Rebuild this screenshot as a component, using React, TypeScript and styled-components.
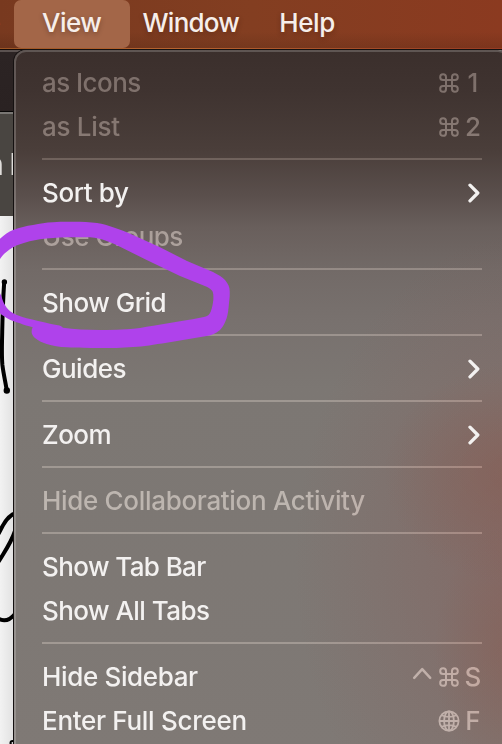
import React from 'react';
import styled, { createGlobalStyle } from 'styled-components';

type IconName = 'command' | 'control' | 'globe';

type MenuEntry = {
  label: string;
  tracking?: number;
  disabled?: boolean;
  submenu?: boolean;
  modifiers?: IconName[];
  shortcut?: string;
};

const groups: MenuEntry[][] = [
  [
    { label: 'as Icons', tracking: -0.55, disabled: true, modifiers: ['command'], shortcut: '1' },
    { label: 'as List', tracking: -0.3, disabled: true, modifiers: ['command'], shortcut: '2' },
  ],
  [
    { label: 'Sort by', tracking: -0.4, submenu: true },
    { label: 'Use Groups', tracking: -0.5, disabled: true },
  ],
  [{ label: 'Show Grid', tracking: -0.5 }],
  [{ label: 'Guides', tracking: -0.5, submenu: true }],
  [{ label: 'Zoom', tracking: -0.5, submenu: true }],
  [{ label: 'Hide Collaboration Activity', tracking: -0.32, disabled: true }],
  [
    { label: 'Show Tab Bar', tracking: -0.6 },
    { label: 'Show All Tabs', tracking: -0.55 },
  ],
  [
    { label: 'Hide Sidebar', tracking: -0.35, modifiers: ['control', 'command'], shortcut: 'S' },
    { label: 'Enter Full Screen', tracking: -0.3, modifiers: ['globe'], shortcut: 'F' },
  ],
];

const CommandIcon = () => (
  <svg width="20" height="20" viewBox="0 0 20 20" fill="none" stroke="currentColor" strokeWidth="2">
    <path d="M13 4v12a2.9 2.9 0 1 0 2.9-3H4a2.9 2.9 0 1 0 3 2.9V4a2.9 2.9 0 1 0-2.9 3H16a2.9 2.9 0 1 0-3-2.9" />
  </svg>
);

const ControlIcon = () => (
  <svg width="20" height="20" viewBox="0 0 20 20" fill="none" stroke="currentColor" strokeWidth="2.5">
    <path d="M2.200 10.800 10.200 2.200l8 8.600" strokeLinecap="round" strokeLinejoin="round" />
  </svg>
);

const GlobeIcon = () => (
  <svg width="22" height="22" viewBox="0 0 22 22" fill="none" stroke="currentColor" strokeWidth="1.8">
    <circle cx="11" cy="11" r="9.6" />
    <ellipse cx="11" cy="11" rx="4.9" ry="9.6" />
    <path d="M11 1.4v19.2M1.4 11h19.2M3.8 5.2c4 2.2 10.4 2.2 14.4 0M3.8 16.8c4-2.2 10.4-2.2 14.4 0" />
  </svg>
);

const icons = { command: CommandIcon, control: ControlIcon, globe: GlobeIcon };

const MenuItem = ({ label, tracking = 0, disabled, submenu, modifiers, shortcut }: MenuEntry) => (
  <Item>
    <Label $tracking={tracking} $dimmed={disabled}>
      {label}
    </Label>
    {submenu && (
      <Chevron width="14" height="22" viewBox="0 0 14 22">
        <path d="M2 3.200l7.800 7.800L2 18.800" />
      </Chevron>
    )}
    {shortcut && (
      <Shortcut>
        {modifiers?.map(name => {
          const Icon = icons[name];
          return (
            <Modifier key={name}>
              <Icon />
            </Modifier>
          );
        })}
        <Key>{shortcut}</Key>
      </Shortcut>
    )}
  </Item>
);

const App = () => {
  return (
    <Screen>
      <GlobalStyle />
      <MenuBar>
        <Previous>e</Previous>
        <MenuTitle $active $tracking={-0.5}>
          View
        </MenuTitle>
        <MenuTitle $tracking={-0.75}>Window</MenuTitle>
        <MenuTitle $tracking={-0.4}>Help</MenuTitle>
      </MenuBar>
      <Workspace>
        <Document>
          <TitleStrip />
          <Toolbar>
            <span>n</span>
            <span>I</span>
          </Toolbar>
          <Canvas>
            <svg width="30" height="528" viewBox="0 216 30 528">
              <path d="M4.2 282C3 300 2.5 315 2.2 332S1.5 355 2.4 365C3.5 374 5.5 382 6.7 390" />
              <path d="M-1 533C3 524 8 515 16 513M-1 561C5 551 11 543 15 531M-1 619C5 622 10 620 15 614" />
              <circle cx="4.4" cy="282" r="0.7" />
              <circle cx="6.8" cy="390.5" r="1.2" />
              <circle cx="12.5" cy="743" r="1" />
            </svg>
          </Canvas>
        </Document>
        <Menu>
          {groups.map((entries, index) => (
            <React.Fragment key={index}>
              {index > 0 && <Separator />}
              {entries.map(entry => (
                <MenuItem key={entry.label} {...entry} />
              ))}
            </React.Fragment>
          ))}
        </Menu>
      </Workspace>
      <Marker width="240" height="744" viewBox="0 0 240 744">
        <path
          fillRule="evenodd"
          d="M-2 240.500C3 236 8 232 13 230C20 227.500 26 226 33 225C40 223.500 46 222.500 53 222.200C60 221.600 66 221.600 73 221.700C82 221.800 90 222 97 223C103 223.800 108 225.500 113 227.300C120 229.500 126 232 133 235L160 247.300L187 261L213 272C218 274.500 222 277 225 280C228 283.500 229.700 287 229.700 291C229.900 296 229.500 299 229 303C228.500 309 228 314 226.700 318C225 323 223 327 220 330C216 333.500 212 335 206.700 336L166.700 342.700C154 344.500 144 346.500 133 347C122 348 111 348 100 348C88 348 78 348 67 347.300C59 347 53 346 46.700 344C42 342.500 38 340.500 35 338C33 336 32 334.500 31.700 332.700C31.500 331 31.700 329 32.700 327.300C28 326 24 325 20 323.300C15 322 11 320.500 6.700 318C3.500 316 1 315 -2 311ZM-2 263C0 258 3 254.500 6.700 251.700C11 248 15 246 20 244.300C26 242 33 240.500 40 239.300C48 238.300 58 237.500 66.700 237.300H90C96 237.600 101 239 106.700 241C111 242.500 115 244.500 120 246.700L146.700 260L180 276L206.700 286.700C210 288.500 212 290 212.700 291.700C213.500 294 213.500 297 213.300 300C212.800 304 212.200 308 210.700 311.700C209.500 314.500 208 316 205 316.700C197 318.500 188 320 180 321.300L153.300 325.700C144 327 136 329 126.700 329.300C118 330 109 330.200 100 330C87 329.800 74 329.500 63 327.800C61.500 326 60 325.500 58 325.200C55 324.700 52.500 324.300 50 323.700C42 321.800 34 320 26.700 318.300C22 317 17 315.500 13.300 313.300C9 311 7 308.500 5 305C3 302 2.500 299.500 1.700 297C1 295 0 293 -2 290Z"
        />
      </Marker>
    </Screen>
  );
};

export default App;

const GlobalStyle = createGlobalStyle`
  * {
    box-sizing: border-box;
  }

  body {
    margin: 0;
    overflow: hidden;
    font-family: Inter, 'Liberation Sans', sans-serif;
  }
`;

const Screen = styled.div`
  position: relative;
  display: flex;
  flex-direction: column;
  width: 502px;
  height: 744px;
  overflow: hidden;
`;

const MenuBar = styled.header`
  display: flex;
  align-items: flex-start;
  height: 50px;
  flex-shrink: 0;
  border-bottom: 1px solid #170b07;
  background:
    linear-gradient(90deg, #9c5525, #b6632f 35%, #963b22) 0 48px / 100% 1px no-repeat,
    linear-gradient(180deg, transparent 65%, rgba(40, 20, 10, 0.16)),
    linear-gradient(90deg, #78391f, #833e21 50%, #8b3a20);
`;

const Previous = styled.span`
  display: flex;
  justify-content: flex-end;
  width: 14px;
  padding: 8px 13px 0 0;
  color: #d2b6a7;
  font-size: 26px;
  line-height: 30px;
`;

const MenuTitle = styled.span<{ $active?: boolean; $tracking: number }>`
  height: 48px;
  padding: 8px 12.5px 0;
  border-radius: 7px;
  color: #f6eeea;
  font-size: 26px;
  font-weight: 500;
  line-height: 30px;
  letter-spacing: ${props => props.$tracking}px;
  text-shadow: 0 2px 5px rgba(40, 15, 5, 0.3);
  ${props => props.$active && 'width: 116px; padding: 8px 0 0 28px; background: #a36648;'}

  & + & + & {
    margin-left: 15px;
  }
`;

const Workspace = styled.main`
  position: relative;
  display: flex;
  flex: 1;
`;

const Document = styled.section`
  display: flex;
  flex-direction: column;
  width: 30px;
`;

const TitleStrip = styled.div`
  height: 62px;
  border-top: 2px solid #5b5250;
  border-bottom: 1px solid #080606;
  background: linear-gradient(180deg, #2c2424, #2a2222);
`;

const Toolbar = styled.div`
  display: flex;
  align-items: flex-start;
  height: 104px;
  padding-top: 32px;
  border-top: 2px solid #7a7774;
  background: #494541;
  color: #dfddda;
  font-size: 30px;
  line-height: 36px;

  span:first-child {
    display: flex;
    justify-content: flex-end;
    width: 4px;
  }

  span:last-child {
    margin-left: 5px;
  }
`;

const Canvas = styled.div`
  flex: 1;
  background: linear-gradient(90deg, #f2f2f2, #e2e2e2 13px);

  svg {
    display: block;
    fill: none;
    stroke: #000;
    stroke-width: 4;
    stroke-linecap: round;
  }
`;

const Menu = styled.nav`
  position: absolute;
  top: 0;
  left: 14px;
  width: 496px;
  height: 720px;
  padding: 9px 26px 0;
  border: 2px solid rgba(255, 255, 255, 0.19);
  border-radius: 12px;
  background:
    radial-gradient(ellipse 130px 110px at 500px 424px, rgba(140, 80, 66, 0.36), transparent),
    radial-gradient(ellipse 240px 330px at 520px 510px, rgba(139, 84, 80, 0.42), transparent),
    radial-gradient(ellipse 80px 130px at 500px 604px, rgba(140, 80, 60, 0.3), transparent),
    linear-gradient(
      180deg,
      #3b2f2c 0,
      #3f3330 40px,
      #4a3e3a 100px,
      #5a4f4c 145px,
      #695f5c 178px,
      #726a67 220px,
      #78716e 270px,
      #7c7773 340px,
      #7f7975 700px
    );
  background-origin: border-box;
  box-shadow: 0 0 0 1px #151111;
`;

const Separator = styled.div`
  height: 2px;
  margin: 9px 0 11px;
  background: #23211f;
  mix-blend-mode: plus-lighter;
`;

const Item = styled.div`
  display: flex;
  align-items: center;
  justify-content: space-between;
  height: 44px;
  color: #f3f1f0;
  font-size: 26px;
  font-weight: 500;
  line-height: 32px;
`;

const Label = styled.span<{ $tracking: number; $dimmed?: boolean }>`
  letter-spacing: ${props => props.$tracking}px;
  white-space: nowrap;
  ${props => props.$dimmed && 'color: #403e3c; mix-blend-mode: plus-lighter;'}
`;

const Chevron = styled.svg`
  fill: none;
  stroke: currentColor;
  stroke-width: 3.3;
  stroke-linecap: round;
  stroke-linejoin: round;
`;

const Shortcut = styled.span`
  display: flex;
  align-items: center;
  color: #403e3c;
  mix-blend-mode: plus-lighter;
`;

const Modifier = styled.span`
  display: flex;
  justify-content: center;
  width: 26.5px;
`;

const Key = styled.span`
  width: 18px;
  margin-left: 2px;
  text-align: center;
`;

const Marker = styled.svg`
  position: absolute;
  top: 0;
  left: 0;
  fill: #af42eb;
  pointer-events: none;
`;
